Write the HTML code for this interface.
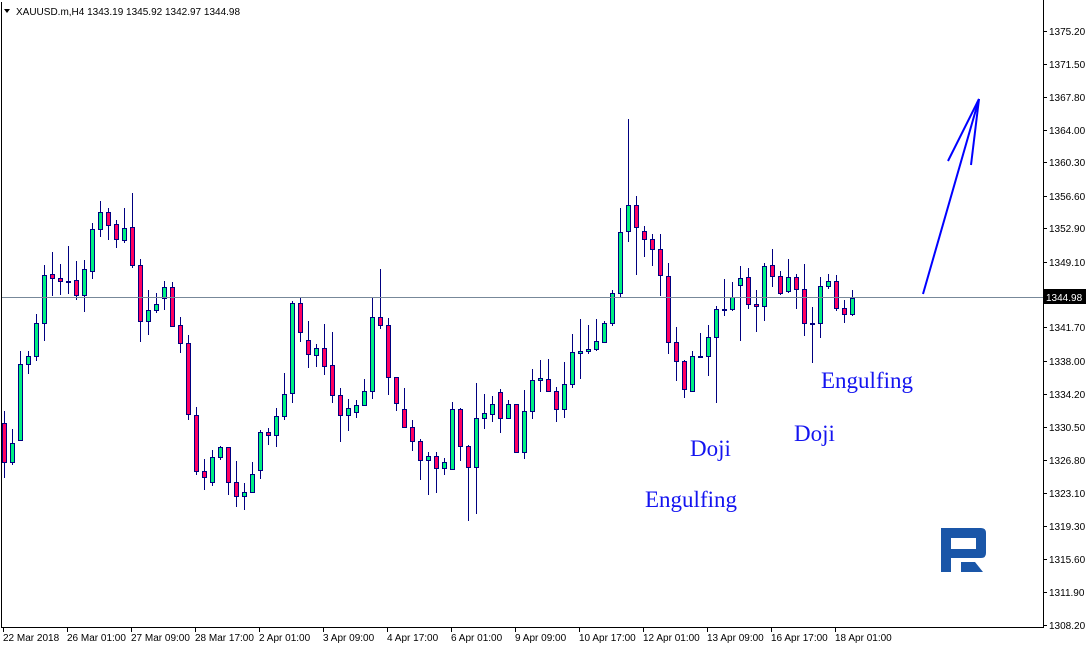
<!DOCTYPE html>
<html><head><meta charset="utf-8"><style>
html,body{margin:0;padding:0;background:#fff;width:1087px;height:648px;overflow:hidden}
svg{display:block}
text{font-family:"Liberation Sans",sans-serif}
</style></head><body>
<svg id="s" width="1087" height="648" xmlns="http://www.w3.org/2000/svg">
<rect x="0" y="0" width="1087" height="648" fill="#fff"/>
<line x1="1.5" y1="2" x2="1.5" y2="627.5" stroke="#000" stroke-width="1"/>
<line x1="1" y1="627.5" x2="1043" y2="627.5" stroke="#000"/>
<line x1="1043.5" y1="0" x2="1043.5" y2="628" stroke="#000"/>
<g id="c" shape-rendering="crispEdges"></g>
<line x1="2" y1="297.5" x2="1043" y2="297.5" stroke="#778899"/>
<polygon points="4,9 10,9 7,13" fill="#000"/>
<text x="16" y="15" font-size="10" fill="#000">XAUUSD.m,H4  1343.19 1345.92 1342.97 1344.98</text>
<g id="ax" font-size="10" fill="#000" shape-rendering="crispEdges"></g>
<rect x="1043" y="289" width="43" height="15" fill="#000"/>
<text x="1046" y="301" font-size="10" fill="#fff">1344.98</text>
<g stroke="#0000ff" stroke-width="2" fill="none">
<line x1="923" y1="294" x2="979" y2="99"/>
<line x1="948" y1="161" x2="979" y2="99"/>
<line x1="971" y1="165" x2="979" y2="99"/>
</g>
<g font-size="23" fill="#1414f0">
<text x="821" y="388" style="font-family:'Liberation Serif',serif">Engulfing</text>
<text x="690" y="456" style="font-family:'Liberation Serif',serif">Doji</text>
<text x="794" y="441" style="font-family:'Liberation Serif',serif">Doji</text>
<text x="645" y="507" style="font-family:'Liberation Serif',serif">Engulfing</text>
</g>
<g fill="#1a56a8">
<path d="M941,528 L981,528 Q986,528 986,533 L986,553 Q986,558 981,558 L960,558 L960,572 L941,572 Z M951,538 L951,549 L976,549 L976,538 Z" fill-rule="evenodd"/>
<path d="M961,562 L975,562 L983,572 L961,572 Z"/>
<rect x="951" y="558" width="9" height="14" fill="#fff"/>
</g>
</svg>
<script>
var d1=[["r",730,845,693,893],["g",790,845,747,855],["g",553,781,513,781],["g",529,553,513,581],["g",430,529,403,542],["g",286,430,255,482],["r",283,295,216,347],["r",295,304,252,344],["r",303,307,198,341],["r",301,346,243,359],["g",268,346,240,395],["g",148,274,129,296],["g",97,148,63,170],["r",97,136,84,179],["r",133,178,120,203],["g",145,181,84,188],["r",142,256,39,265],["r",256,424,237,485],["g",391,424,330,464],["g",373,391,339,398],["g",322,355,303,389],["r",322,437,306,440],["r",436,490,411,518],["r",490,703,465,721],["r",706,874,682,884],["r",874,892,837,929],["g",832,907,810,917],["g",802,832,799,839],["r",802,907,802,944],["r",907,949,843,980],["g",937,949,910,989],["g",883,937,847,937],["g",757,871,751,896],["r",757,766,744,795],["g",709,766,684,800],["g",643,709,579,719],["g",370,640,364,668],["r",370,457,355,485]];
var d2=[["r",241,283,183,323],["g",265,286,253,320],["r",265,317,192,344],["r",316,406,216,428],["r",406,466,384,545],["g",445,466,417,512],["g",436,457,420,475],["g",394,436,357,436],["g",172,394,115,418],["r",172,196,27,208],["r",196,352,175,406],["r",352,430,352,454],["r",448,502,384,505],["r",502,544,480,572],["r",544,601,538,661],["g",589,601,577,706],["r",589,625,577,700],["g",607,625,595,646],["g",448,628,427,628],["r",448,559,445,604],["r",559,622,556,784],["g",475,622,370,763],["g",460,475,403,506],["g",433,463,409,485],["r",397,475,388,520],["g",433,475,421,478],["r",433,577,433,580],["g",454,577,391,598],["g",361,454,328,476],["g",355,361,301,397],["r",358,394,298,397],["r",394,448,382,485],["g",373,448,307,473],["g",277,373,223,385],["g",274,280,178,358]];
var d3=[["g",717,723,645,733],["g",693,717,627,724],["g",639,697,633,700],["g",549,639,540,648],["g",367,549,294,560],["g",286,364,27,397],["r",286,352,259,496],["r",364,388,349,442],["r",388,418,373,469],["r",418,496,373,559],["r",499,697,460,731],["r",697,754,652,812],["r",754,838,751,865],["g",739,844,724,844],["r",739,742,670,745],["g",682,739,646,797],["g",598,682,589,878],["r",598,598,508,619],["g",562,598,517,604],["g",505,526,469,694],["r",502,583,475,598],["r",583,589,541,667],["g",469,589,460,634],["r",466,499,418,532],["r",499,550,484,556],["g",502,544,448,550],["r",502,538,493,598],["r",538,640,463,679],["r",640,640,592,760],["g",529,640,502,685],["g",514,529,493,538],["r",514,595,496,604],["r",595,613,571,640],["g",565,613,541,619]];
var all=[];
d1.forEach(function(a){all.push([a[0],180+a[1]/3,180+a[2]/3,180+a[3]/3,180+a[4]/3])});
d2.forEach(function(a){all.push([a[0],260+a[1]/3,260+a[2]/3,260+a[3]/3,260+a[4]/3])});
d3.forEach(function(a){all.push([a[0],110+a[1]/3,110+a[2]/3,110+a[3]/3,110+a[4]/3])});
var h="";
all.forEach(function(a,k){
 var x=4+8*k;
 h+='<rect x="'+x+'" y="'+Math.round(a[3])+'" width="1" height="'+Math.max(1,Math.round(a[4])-Math.round(a[3]))+'" fill="#000080"/>';
 var t=Math.round(a[1]),b=Math.round(a[2]);
 if(b-t<2){h+='<rect x="'+(x-2)+'" y="'+t+'" width="5" height="2" fill="#000080"/>';}
 else h+='<rect x="'+(x-2)+'" y="'+t+'" width="5" height="'+(b-t+1)+'" fill="#000080"/><rect x="'+(x-1)+'" y="'+(t+1)+'" width="3" height="'+(b-t-1)+'" fill="'+(a[0]=="g"?"#00f080":"#ff0060")+'"/>';
});
document.getElementById("c").innerHTML=h;
var L=["1375.20","1371.50","1367.80","1364.00","1360.30","1356.60","1352.90","1349.10","1345.40","1341.70","1338.00","1334.20","1330.50","1326.80","1323.10","1319.30","1315.60","1311.90","1308.20"];
var Y=[31,64,97,130,162,196,228,262,295,327,361,394,427,460,493,526,559,592,625];
var g="";
for(var i=0;i<L.length;i++){g+='<line x1="1043" y1="'+(Y[i]+0.5)+'" x2="1047" y2="'+(Y[i]+0.5)+'" stroke="#000"/><text x="1049" y="'+(Y[i]+4)+'">'+L[i]+'</text>';}
var T=["22 Mar 2018","26 Mar 01:00","27 Mar 09:00","28 Mar 17:00","2 Apr 01:00","3 Apr 09:00","4 Apr 17:00","6 Apr 01:00","9 Apr 09:00","10 Apr 17:00","12 Apr 01:00","13 Apr 09:00","16 Apr 17:00","18 Apr 01:00"];
for(var j=0;j<T.length;j++){var x=3+64*j;g+='<line x1="'+(x+0.5)+'" y1="627" x2="'+(x+0.5)+'" y2="632" stroke="#000"/><text x="'+(x)+'" y="641">'+T[j]+'</text>';}
document.getElementById("ax").innerHTML=g;
</script>
</body></html>
